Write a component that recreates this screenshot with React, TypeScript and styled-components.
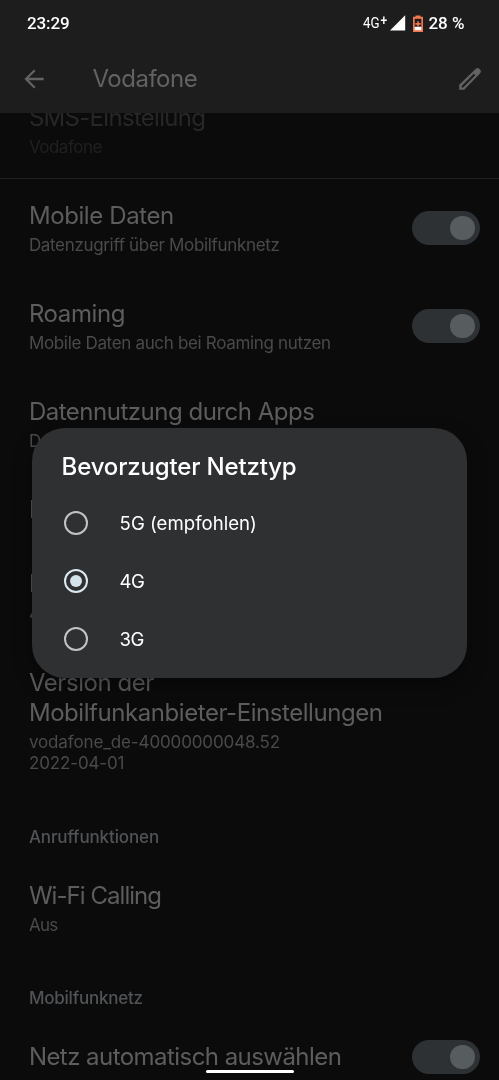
import React from 'react';
import styled, { createGlobalStyle } from 'styled-components';

const Global = createGlobalStyle`
  * { box-sizing: border-box; }
  body {
    margin: 0;
    background: #0b0b0b;
    font-family: Inter, Roboto, sans-serif;
  }
`;

const Screen = styled.div`
  position: relative;
  display: flex;
  flex-direction: column;
  width: 100%;
  height: 1080px;
  overflow: hidden;
  will-change: transform;
`;

const Header = styled.header`
  flex: none;
  height: 113px;
  background: #1d1d1d;
`;

const StatusBar = styled.div`
  display: flex;
  align-items: center;
  justify-content: space-between;
  height: 46px;
  padding: 0 34.5px 0 27px;
  font: 500 17px/20px Roboto, sans-serif;
  color: #fff;
`;

const Clock = styled.span`
  letter-spacing: -0.1px;
`;

const StatusIcons = styled.div`
  display: flex;
  align-items: center;
`;

const NetworkLabel = styled.span`
  width: 24px;
  font-size: 15.5px;
  font-weight: 400;
  white-space: nowrap;
  transform: scaleX(0.86);
  transform-origin: left;
`;

const Plus = styled.span`
  display: inline-block;
  margin-left: 1px;
  font-size: 14px;
  font-weight: 500;
  transform: translateY(-3px);
`;

const SignalIcon = styled.svg`
  width: 16px;
  height: 16px;
  margin: 0 7.5px 0 2.5px;
`;

const BatteryIcon = styled.svg`
  width: 10px;
  height: 17px;
  margin-right: 5px;
`;

const AppBar = styled.div`
  display: flex;
  align-items: center;
  height: 66px;
  padding: 0 17.5px 0 24px;
  color: #626262;
`;

const BackIcon = styled.svg`
  width: 20px;
  height: 20px;
`;

const EditIcon = styled.svg`
  width: 24px;
  height: 24px;
  margin-left: auto;
`;

const ScreenTitle = styled.h1`
  margin: 0 0 0 48.5px;
  font-size: 24px;
  font-weight: 400;
  line-height: 30px;
  letter-spacing: -0.5px;
`;

const Viewport = styled.main`
  flex: 1;
  min-height: 0;
  overflow: hidden;
`;

const List = styled.div`
  margin-top: -32.3px;
`;

const PreferenceRow = styled.section<{ $disabled?: boolean; $divided?: boolean }>`
  display: flex;
  align-items: center;
  justify-content: space-between;
  padding: 21.8px 19.4px 21.8px 28.9px;
  color: ${p => (p.$disabled ? '#272727' : '#5d5d5d')};
  box-shadow: ${p => (p.$divided ? 'inset 0 -1px #202020' : 'none')};
`;

const PreferenceText = styled.div`
  min-width: 0;
  white-space: pre-line;
`;

const Title = styled.div<{ $track?: number }>`
  font-size: 24px;
  line-height: 30.6px;
  letter-spacing: ${p => p.$track ?? -0.4}px;
`;

const Summary = styled.div<{ $disabled?: boolean; $track?: number }>`
  margin: 3.6px 0 -0.6px;
  font-size: 17px;
  line-height: 21px;
  letter-spacing: ${p => p.$track ?? -0.33}px;
  color: ${p => (p.$disabled ? '#202020' : '#4a4a4a')};
`;

const SectionHeading = styled.h2<{ $track: number }>`
  height: 63.1px;
  margin: 0;
  padding: 30.9px 28.9px 0;
  font-size: 17px;
  font-weight: 500;
  line-height: 21px;
  letter-spacing: ${p => p.$track}px;
  color: #505456;
`;

const SwitchTrack = styled.div`
  display: flex;
  flex: none;
  align-items: center;
  justify-content: flex-end;
  width: 68px;
  height: 34px;
  margin: -2px 0;
  padding-right: 5px;
  border-radius: 17px;
  background: #2d3134;
`;

const SwitchThumb = styled.div`
  width: 24.5px;
  height: 24.5px;
  border-radius: 50%;
  background: #575c5e;
`;

const Dialog = styled.div`
  position: absolute;
  top: 427.5px;
  left: 32.3px;
  width: 434.5px;
  height: 250.5px;
  border-radius: 33px;
  background: #2f3032;
  box-shadow: 0 8px 20px rgba(0, 0, 0, 0.35);
  color: #fff;
`;

const DialogTitle = styled.h2`
  height: 66.5px;
  margin: 0;
  padding: 24px 28px 0 29.3px;
  font-size: 24px;
  font-weight: 500;
  line-height: 30px;
  letter-spacing: -0.17px;
`;

const Option = styled.label`
  display: flex;
  align-items: center;
  gap: 31.5px;
  height: 58.1px;
  padding-left: 31.3px;
  font-size: 18.6px;
  line-height: 24px;
`;

const OptionText = styled.span<{ $track: number }>`
  letter-spacing: ${p => p.$track}px;
`;

const Radio = styled.span<{ $checked: boolean }>`
  display: flex;
  align-items: center;
  justify-content: center;
  width: 24.5px;
  height: 24.5px;
  border: 2.4px solid ${p => (p.$checked ? '#dce9f1' : '#c3c3c3')};
  border-radius: 50%;

  &::after {
    content: '';
    width: 12.5px;
    height: 12.5px;
    border-radius: 50%;
    background: ${p => (p.$checked ? '#d4e2ea' : 'transparent')};
  }
`;

const HomeIndicator = styled.div`
  position: absolute;
  bottom: 7.5px;
  left: 206px;
  width: 87.5px;
  height: 3px;
  border-radius: 2px;
  background: #fff;
`;

interface PreferenceProps {
  title: string;
  summary?: string;
  titleTrack?: number;
  summaryTrack?: number;
  disabled?: boolean;
  divided?: boolean;
  toggle?: boolean;
}

function Preference({ title, summary, titleTrack, summaryTrack, disabled, divided, toggle }: PreferenceProps) {
  return (
    <PreferenceRow $disabled={disabled} $divided={divided}>
      <PreferenceText>
        <Title $track={titleTrack}>{title}</Title>
        {summary && <Summary $disabled={disabled} $track={summaryTrack}>{summary}</Summary>}
      </PreferenceText>
      {toggle && <SwitchTrack><SwitchThumb /></SwitchTrack>}
    </PreferenceRow>
  );
}

const options = [
  { label: '5G (empfohlen)', track: 0.01 },
  { label: '4G', track: -0.6 },
  { label: '3G', track: -0.6 },
];

export default function App() {
  return (
    <>
      <Global />
      <Screen>
        <Header>
          <StatusBar>
            <Clock>23:29</Clock>
            <StatusIcons>
              <NetworkLabel>4G<Plus>+</Plus></NetworkLabel>
              <SignalIcon viewBox="0 0 16 16"><path d="M0 15.5 15.2.3v15.2z" fill="#fff" /></SignalIcon>
              <BatteryIcon viewBox="0 0 10 17">
                <path d="M2.5 1.7V.5h5v1.2H10V17H0V1.7z" fill="#f07850" />
                <path d="M1.7 3.8h6.6v8H1.7z" fill="#1d1d1d" />
                <path d="M1.7 11.8h6.6v3.4H1.7z" fill="#fff" />
                <path d="M4.2 6.2h1.6v1.9h1.9v1.6H5.8v1.9H4.2V9.7H2.3V8.1h1.9z" fill="#f07850" />
              </BatteryIcon>
              <span>28 %</span>
            </StatusIcons>
          </StatusBar>
          <AppBar>
            <BackIcon viewBox="0 0 20 20" fill="none" stroke="currentColor" strokeWidth="2.3">
              <path d="M19.7 10H2M10.8 1.2 2 10l8.8 8.8" />
            </BackIcon>
            <ScreenTitle>Vodafone</ScreenTitle>
            <EditIcon viewBox="0 0 24 24" fill="currentColor">
              <path fillRule="evenodd" d="M1.2 17.8 17.8 1.7Q19.5.2 21.3 1.8L22.2 2.7Q23.8 4.4 22.2 6.2L6.2 22.8H1.2ZM3.7 18.9v1.5H5.2L17.3 8.2 15.8 6.7Z" />
            </EditIcon>
          </AppBar>
        </Header>
        <Viewport>
          <List>
            <Preference title="SMS-Einstellung" titleTrack={-0.7} summary="Vodafone" summaryTrack={-0.5} disabled divided />
            <Preference title="Mobile Daten" titleTrack={-0.4} summary="Datenzugriff über Mobilfunknetz" toggle />
            <Preference title="Roaming" titleTrack={-0.4} summary="Mobile Daten auch bei Roaming nutzen" toggle />
            <Preference title="Datennutzung durch Apps" titleTrack={-0.49} summary="D" />
            <Preference title="I" />
            <Preference title="Bevorzugter Netztyp" summary="4G" />
            <Preference
              title={'Version der\nMobilfunkanbieter-Einstellungen'}
              titleTrack={-0.44}
              summary={'vodafone_de-40000000048.52\n2022-04-01'}
              summaryTrack={-0.13}
            />
            <SectionHeading $track={-0.13}>Anruffunktionen</SectionHeading>
            <Preference title="Wi-Fi Calling" titleTrack={-0.95} summary="Aus" summaryTrack={-0.7} />
            <SectionHeading $track={-0.22}>Mobilfunknetz</SectionHeading>
            <Preference title="Netz automatisch auswählen" titleTrack={-0.55} toggle />
          </List>
        </Viewport>
        <Dialog role="dialog">
          <DialogTitle>Bevorzugter Netztyp</DialogTitle>
          {options.map(({ label, track }) => (
            <Option key={label}>
              <Radio $checked={label === '4G'} />
              <OptionText $track={track}>{label}</OptionText>
            </Option>
          ))}
        </Dialog>
        <HomeIndicator />
      </Screen>
    </>
  );
}
